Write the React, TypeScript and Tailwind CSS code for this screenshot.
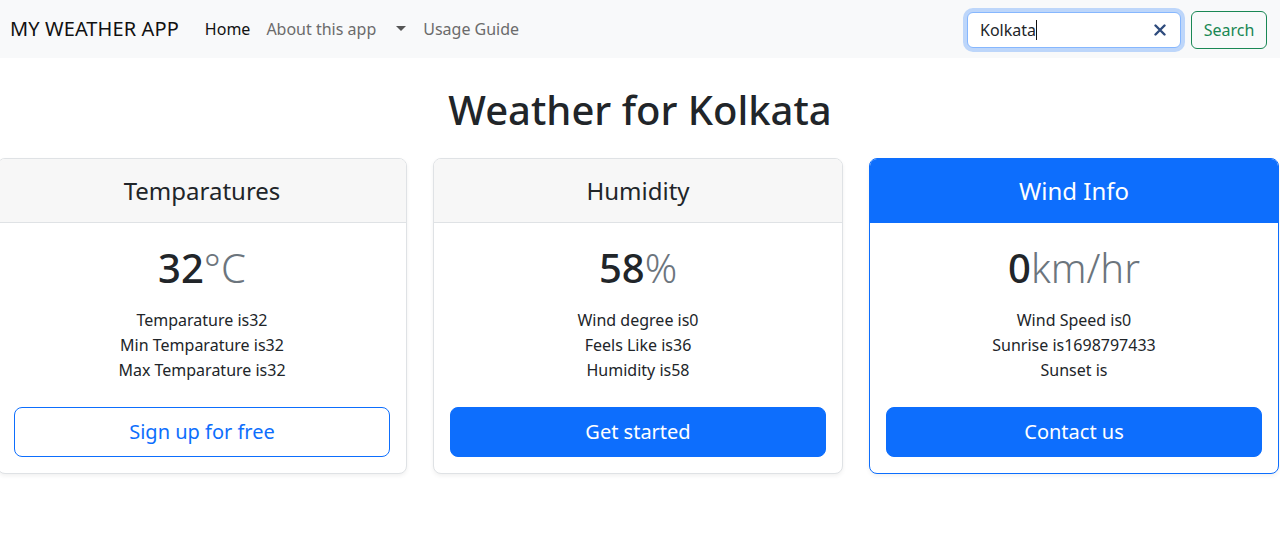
import React from "react";

const font = { fontFamily: '"Noto Sans", "Open Sans", sans-serif' };

function Card(props: {
  title: string;
  value: string;
  unit: string;
  lines: string[];
  button: string;
  variant: "outline" | "solid" | "primary";
}) {
  const primary = props.variant === "primary";
  return (
    <div
      className={
        "w-[410px] shrink-0 rounded-[8px] border flex flex-col overflow-hidden bg-white shadow-[0_2px_4px_rgba(0,0,0,0.06)] " +
        (primary ? "border-[#0d6efd]" : "border-[#dfe2e5]")
      }
    >
      <div
        className={
          "h-[64px] flex items-center justify-center text-[24px] border-b " +
          (primary
            ? "bg-[#0d6efd] text-white border-[#0d6efd]"
            : "bg-[#f7f7f7] text-[#212529] border-[#dfe2e5]")
        }
      >
        {props.title}
      </div>
      <div className="flex flex-col items-center px-[16px] pt-[17px] pb-[16px]">
        <div className="text-[40px] leading-[56px] text-[#212529] font-medium">
          {props.value}
          <span className="font-light text-[#6c757d]">{props.unit}</span>
        </div>
        <div className="mt-[12px] flex flex-col items-center text-[16px] leading-[25px] text-[#212529]">
          {props.lines.map((l) => (
            <div key={l}>{l}</div>
          ))}
        </div>
        <button
          className={
            "mt-[24px] w-full h-[50px] rounded-[8px] text-[20px] border " +
            (props.variant === "outline"
              ? "border-[#0d6efd] text-[#0d6efd] bg-white"
              : "border-[#0d6efd] bg-[#0d6efd] text-white")
          }
          style={font}
        >
          {props.button}
        </button>
      </div>
    </div>
  );
}

export default function App() {
  return (
    <div className="min-h-[559px] bg-white overflow-hidden" style={font}>
      <nav className="h-[58px] bg-[#f8f9fa] flex items-center pl-[10px] pr-[13px]">
        <div className="text-[20px] text-[#111] mr-[26px] tracking-[0.1px]">MY WEATHER APP</div>
        <div className="flex items-center text-[16px]">
          <span className="text-[#111] mr-[16px]">Home</span>
          <span className="text-[#6b6b6b]">About this app</span>
          <svg width="10" height="6" viewBox="0 0 10 6" className="ml-[20px] mr-[17px]">
            <path d="M0 0 L10 0 L5 5 Z" fill="#555" />
          </svg>
          <span className="text-[#6b6b6b]">Usage Guide</span>
        </div>
        <div className="ml-auto flex items-center gap-[10px] pt-[1px]">
          <div className="w-[214px] h-[36px] rounded-[6px] border border-[#86b7fe] shadow-[0_0_0_4px_rgba(13,110,253,0.25)] bg-white flex items-center pl-[12px] pr-[14px]">
            <span className="text-[16px] text-[#212529]">Kolkata</span>
            <span className="w-[1px] h-[20px] bg-[#111]" />
            <svg width="12" height="12" viewBox="0 0 12 12" className="ml-auto">
              <path d="M1.5 1.5 L10.5 10.5 M10.5 1.5 L1.5 10.5" stroke="#2e4b7d" strokeWidth="2.4" strokeLinecap="round" />
            </svg>
          </div>
          <button className="h-[38px] w-[76px] rounded-[6px] border border-[#198754] text-[#198754] text-[16px]" style={font}>
            Search
          </button>
        </div>
      </nav>
      <h1 className="text-center text-[40px] font-medium text-[#212529] mt-[24px] mb-[20px] leading-[56px]">
        Weather for Kolkata
      </h1>
      <div className="flex gap-[26px] ml-[-3px]">
        <Card
          title="Temparatures"
          value="32"
          unit="°C"
          lines={["Temparature is32", "Min Temparature is32", "Max Temparature is32"]}
          button="Sign up for free"
          variant="outline"
        />
        <Card
          title="Humidity"
          value="58"
          unit="%"
          lines={["Wind degree is0", "Feels Like is36", "Humidity is58"]}
          button="Get started"
          variant="solid"
        />
        <Card
          title="Wind Info"
          value="0"
          unit="km/hr"
          lines={["Wind Speed is0", "Sunrise is1698797433", "Sunset is"]}
          button="Contact us"
          variant="primary"
        />
      </div>
    </div>
  );
}
